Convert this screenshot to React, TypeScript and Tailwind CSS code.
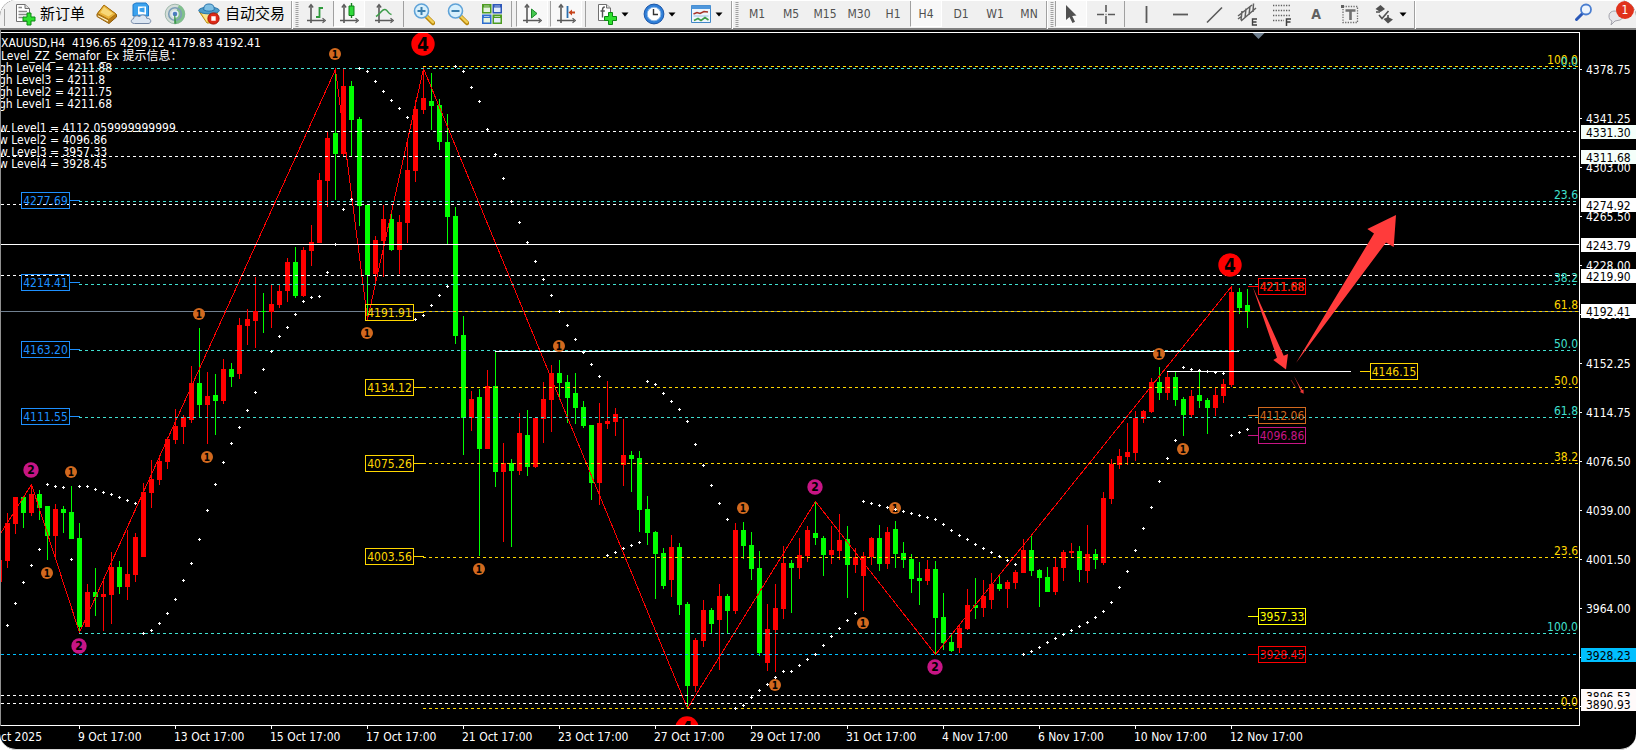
import type { ReactNode } from "react";

// [up, high, body top, body bottom, low]
const CANDLES: number[][] = [
    [1, 513, 523, 561, 568], [1, 497, 497, 524, 534], [0, 497, 497, 513, 528], [1, 484, 494, 513, 516],
    [0, 490, 494, 508, 520], [0, 506, 506, 536, 560], [1, 504, 509, 536, 560], [0, 506, 509, 513, 533],
    [0, 486, 512, 539, 539], [0, 523, 538, 627, 632], [1, 584, 592, 627, 627], [0, 568, 592, 597, 616],
    [1, 578, 594, 597, 631], [1, 552, 567, 595, 624], [0, 561, 567, 587, 594], [1, 530, 574, 587, 600],
    [1, 533, 537, 575, 582], [1, 483, 492, 557, 557], [1, 460, 479, 493, 508], [1, 457, 461, 480, 485],
    [1, 437, 439, 462, 469], [1, 409, 426, 440, 444], [1, 415, 417, 427, 444], [1, 366, 383, 420, 423],
    [0, 328, 383, 405, 417], [1, 372, 396, 405, 444], [0, 374, 395, 401, 435], [1, 359, 369, 401, 404],
    [0, 363, 369, 377, 387], [1, 318, 325, 374, 379], [1, 309, 319, 326, 345], [1, 277, 311, 321, 348],
    [0, 293, 311, 312, 333], [1, 285, 304, 312, 328], [1, 285, 291, 305, 308], [1, 258, 262, 291, 302],
    [0, 247, 262, 296, 298], [1, 247, 250, 296, 297], [1, 225, 242, 251, 266], [1, 173, 180, 243, 243],
    [1, 132, 138, 181, 207], [0, 70, 133, 154, 200], [1, 69, 86, 154, 157], [0, 81, 86, 120, 156],
    [0, 117, 119, 206, 226], [0, 205, 205, 275, 316], [1, 236, 240, 274, 281], [1, 205, 219, 241, 277],
    [0, 213, 219, 250, 251], [1, 215, 222, 250, 274], [1, 138, 170, 223, 243], [1, 100, 109, 171, 182],
    [1, 68, 98, 110, 114], [0, 73, 101, 106, 130], [0, 99, 105, 142, 150], [0, 114, 142, 217, 244],
    [0, 207, 216, 336, 344], [0, 316, 335, 418, 455], [1, 391, 399, 418, 431], [0, 389, 397, 449, 556],
    [1, 370, 386, 449, 449], [0, 351, 386, 472, 487], [1, 443, 463, 472, 542], [0, 459, 463, 471, 547],
    [1, 413, 433, 471, 475], [0, 410, 435, 467, 476], [1, 417, 418, 467, 468], [1, 382, 399, 419, 443],
    [1, 365, 373, 400, 432], [0, 360, 373, 383, 400], [0, 375, 382, 398, 423], [0, 373, 393, 408, 424],
    [0, 401, 407, 426, 428], [0, 425, 425, 483, 500], [1, 403, 423, 483, 505], [1, 381, 421, 424, 429],
    [1, 408, 414, 422, 436], [1, 419, 455, 465, 486], [0, 451, 455, 459, 492], [0, 451, 458, 510, 532],
    [0, 496, 509, 533, 545], [0, 531, 532, 554, 599], [0, 548, 553, 586, 589], [1, 535, 547, 580, 597],
    [0, 543, 547, 605, 615], [0, 602, 604, 686, 708], [1, 638, 640, 686, 692], [1, 600, 610, 641, 647],
    [0, 608, 610, 624, 634], [1, 584, 596, 620, 670], [0, 594, 596, 611, 634], [1, 523, 530, 611, 614],
    [0, 522, 530, 546, 559], [0, 532, 545, 569, 580], [0, 551, 568, 653, 656], [1, 604, 629, 663, 671],
    [1, 584, 608, 630, 672], [1, 546, 563, 609, 619], [0, 560, 563, 568, 613], [1, 538, 555, 568, 579],
    [1, 526, 530, 556, 562], [0, 501, 533, 538, 545], [0, 536, 538, 555, 576], [1, 526, 550, 555, 564],
    [1, 514, 540, 551, 560], [0, 526, 539, 565, 598], [1, 548, 557, 565, 573], [1, 552, 556, 576, 611],
    [1, 537, 538, 557, 565], [0, 525, 538, 564, 571], [1, 527, 532, 564, 569], [0, 521, 529, 554, 568],
    [0, 542, 553, 560, 568], [0, 554, 559, 579, 593], [0, 562, 578, 581, 605], [1, 560, 569, 581, 585],
    [0, 561, 569, 618, 654], [0, 593, 617, 643, 650], [0, 635, 642, 651, 652], [1, 625, 628, 648, 653],
    [1, 589, 605, 629, 630], [0, 578, 605, 608, 619], [1, 580, 596, 608, 617], [1, 573, 584, 600, 609],
    [0, 576, 584, 589, 591], [1, 580, 582, 589, 608], [1, 570, 572, 583, 589], [1, 539, 550, 573, 573],
    [0, 536, 550, 571, 576], [0, 569, 570, 578, 607], [0, 567, 577, 592, 592], [1, 557, 567, 592, 595],
    [1, 550, 552, 568, 581], [1, 543, 551, 553, 557], [0, 546, 551, 570, 582], [1, 525, 554, 571, 583],
    [0, 549, 554, 560, 569], [1, 492, 498, 563, 565], [1, 459, 464, 499, 504], [1, 449, 456, 465, 469],
    [1, 423, 452, 457, 465], [1, 411, 418, 453, 461], [1, 410, 411, 419, 423], [1, 378, 382, 412, 413],
    [0, 367, 382, 393, 400], [1, 372, 377, 393, 400], [0, 372, 377, 400, 406], [0, 397, 399, 415, 436],
    [1, 390, 396, 415, 417], [0, 371, 395, 401, 408], [0, 398, 400, 408, 434], [1, 387, 395, 408, 416],
    [1, 379, 384, 396, 403], [1, 286, 292, 385, 387], [0, 288, 292, 308, 314], [0, 289, 305, 312, 328],
];

// parabolic SAR, one value per candle
const SAR = [
    625, 603, 582, 565, 549, 484, 486, 487, 559, 486, 486, 489, 492, 494, 497, 500, 503, 633, 630, 623,
    613, 599, 580, 563, 539, 510, 484, 462, 443, 427, 410, 392, 369, 351, 336, 327, 314, 301, 297, 296,
    272, 244, 209, 199, 68, 71, 81, 91, 100, 108, 117, 319, 315, 305, 295, 286, 66, 71, 87, 101,
    129, 154, 178, 201, 222, 242, 261, 279, 295, 311, 325, 339, 352, 364, 376, 555, 552, 548, 545, 542,
    381, 384, 393, 401, 409, 421, 444, 465, 485, 503, 519, 708, 705, 697, 690, 684, 677, 671, 671, 665,
    659, 654, 645, 636, 628, 620, 613, 501, 503, 505, 507, 509, 511, 513, 515, 517, 519, 524, 530, 535,
    539, 544, 548, 552, 556, 560, 564, 654, 651, 647, 642, 638, 634, 630, 626, 622, 617, 611, 602, 587,
    571, 550, 528, 507, 481, 458, 440, 367, 369, 370, 371, 372, 373, 435, 432, 429,
];

const WHITE = "#ffffff";
const GOLD = "#ffd700";
const TURQUOISE = "#40e0d0";
const BLUE = "#1e90ff";
const ORANGE = "#d2691e";
const VIOLET = "#c71585";
const RED = "#ff0000";

const LEVELS = [
    { y: 131, x: 1, color: WHITE }, { y: 156, x: 1, color: WHITE }, { y: 204, x: 1, color: WHITE },
    { y: 275, x: 1, color: WHITE }, { y: 695, x: 1, color: WHITE }, { y: 703, x: 1, color: WHITE },
    { y: 654, x: 1, color: "#00bfff" },
    { y: 66, x: 423, color: GOLD, label: "100.0" }, { y: 311, x: 423, color: GOLD, label: "61.8" },
    { y: 387, x: 423, color: GOLD, label: "50.0" }, { y: 463, x: 423, color: GOLD, label: "38.2" },
    { y: 557, x: 423, color: GOLD, label: "23.6" }, { y: 708, x: 423, color: GOLD, label: "0.0" },
    { y: 68, x: 79, color: TURQUOISE, label: "0.0" }, { y: 201, x: 79, color: TURQUOISE, label: "23.6" },
    { y: 284, x: 79, color: TURQUOISE, label: "38.2" }, { y: 350, x: 79, color: TURQUOISE, label: "50.0" },
    { y: 417, x: 79, color: TURQUOISE, label: "61.8" }, { y: 633, x: 79, color: TURQUOISE, label: "100.0" },
];

// side: where the short stub sits
const TAGS = [
    { x: 21, y: 200, text: "4277.69", color: BLUE, side: "right" },
    { x: 21, y: 282, text: "4214.41", color: BLUE, side: "right" },
    { x: 21, y: 349, text: "4163.20", color: BLUE, side: "right" },
    { x: 21, y: 416, text: "4111.55", color: BLUE, side: "right" },
    { x: 365, y: 312, text: "4191.91", color: GOLD, side: "right" },
    { x: 365, y: 387, text: "4134.12", color: GOLD, side: "right" },
    { x: 365, y: 463, text: "4075.26", color: GOLD, side: "right" },
    { x: 365, y: 556, text: "4003.56", color: GOLD, side: "right" },
    { x: 1258, y: 286, text: "4211.68", color: ORANGE, side: "left" },
    { x: 1258, y: 286, text: "4211.88", color: RED, side: "left" },
    { x: 1258, y: 415, text: "4112.06", color: ORANGE, side: "left" },
    { x: 1258, y: 435, text: "4096.86", color: VIOLET, side: "left" },
    { x: 1258, y: 616, text: "3957.33", color: "#ffff00", side: "left" },
    { x: 1258, y: 654, text: "3928.45", color: RED, side: "left" },
    { x: 1370, y: 371, text: "4146.15", color: GOLD, side: "left" },
];

const MARKS: [number, number, number][] = [
    [1, 335, 54], [1, 199, 314], [1, 367, 333], [1, 207, 457], [1, 71, 472], [1, 47, 573],
    [1, 559, 346], [1, 479, 569], [1, 743, 508], [1, 775, 685], [1, 895, 508], [1, 863, 623],
    [1, 1159, 354], [1, 1183, 449],
    [2, 31, 470], [2, 79, 646], [2, 815, 487], [2, 935, 667],
    [4, 423, 44], [4, 687, 728], [4, 1230, 265],
];

const PRICES: [number, string][] = [
    [69, "4378.75"], [118, "4341.25"], [167, "4303.00"], [216, "4265.50"], [265, "4228.00"],
    [314, "4189.75"], [363, "4152.25"], [412, "4114.75"], [461, "4076.50"], [510, "4039.00"],
    [559, "4001.50"], [608, "3964.00"], [657, "3926.50"], [706, "3888.25"],
];

const PRICE_BOXES: [number, string, string][] = [
    [125, "4331.30", "#f5fffa"], [150, "4311.68", "#f5fffa"], [198, "4274.92", WHITE],
    [238, "4243.79", WHITE], [269, "4219.90", WHITE], [304, "4192.41", WHITE],
    [648, "3928.23", "#00bfff"], [689, "3896.53", "#fffafa"], [697, "3890.93", "#fffafa"],
];

const DATES = [
    "9 Oct 17:00", "13 Oct 17:00", "15 Oct 17:00", "17 Oct 17:00", "21 Oct 17:00", "23 Oct 17:00",
    "27 Oct 17:00", "29 Oct 17:00", "31 Oct 17:00", "4 Nov 17:00", "6 Nov 17:00", "10 Nov 17:00",
    "12 Nov 17:00",
];

const COMMENTS: [number, string][] = [
    [72, "gh Level4 = 4211.88"], [84, "gh Level3 = 4211.8"], [96, "gh Level2 = 4211.75"],
    [108, "gh Level1 = 4211.68"], [132, "w Level1 = 4112.059999999999"], [144, "w Level2 = 4096.86"],
    [156, "w Level3 = 3957.33"], [168, "w Level4 = 3928.45"],
];

const candleX = (i: number) => 7 + i * 8;

function Icon({ children, w = 22 }: { children: ReactNode; w?: number }) {
    return (
        <svg width={w} height="24" viewBox={`0 0 ${w} 24`} fill="none" className="shrink-0" aria-hidden="true">
            {children}
        </svg>
    );
}

function Tool({ label, pressed, children }: { label: string; pressed?: boolean; children: ReactNode }) {
    return (
        <button
            aria-label={label}
            aria-pressed={pressed}
            className={
                pressed
                    ? "mr-[2px] flex h-[26px] w-[32px] items-center justify-center border-b border-l border-r border-b-white border-l-[#a0a0a0] border-r-white bg-[#f8f8f8] text-[#505050]"
                    : "flex h-[26px] w-[34px] items-center justify-center text-[#505050]"
            }
        >
            {children}
        </button>
    );
}

function MenuTool({ label, children }: { label: string; children: ReactNode }) {
    return (
        <button aria-label={label} className="flex h-[26px] w-[47px] items-center justify-center gap-[3px] text-[#505050]">
            {children}
            <Caret />
        </button>
    );
}

function Caret() {
    return (
        <svg width="8" height="5" viewBox="0 0 8 5" className="shrink-0" aria-hidden="true">
            <path d="M0.5 0.5h7L4 4.5z" fill="#000" />
        </svg>
    );
}

function Divider() {
    return <div className="h-[26px] w-px shrink-0 bg-[#a0a0a0]" />;
}

function GroupEdge() {
    return (
        <div className="flex h-[28px] shrink-0 gap-[2px]">
            <div className="w-[2px] border-l border-r border-l-[#a0a0a0] border-r-white" />
            <svg width="4" height="26" viewBox="0 0 4 26" aria-hidden="true">
                <path d="M2 1V26" stroke="#a0a0a0" strokeWidth="3" strokeDasharray="1 1" />
            </svg>
        </div>
    );
}

function Axes() {
    return (
        <g stroke="#5a5a5a" strokeWidth="1.6">
            <path d="M5 3V21M1 18.5H18" />
            <path d="M2.8 5.5L5 2.6L7.2 5.5M16.5 16.2L19.4 18.5L16.5 20.8" strokeWidth="1.3" />
        </g>
    );
}

function Plus({ x, y }: { x: number; y: number }) {
    return (
        <path
            d={`M${x + 4} ${y}h4v4h4v4h-4v4h-4v-4h-4v-4h4z`}
            fill="#2fe02f"
            stroke="#0a8a12"
            strokeWidth="1"
        />
    );
}

function Magnifier({ plus }: { plus: boolean }) {
    return (
        <Icon>
            <path d="M13 14L20 21" stroke="#b8860b" strokeWidth="4.5" strokeLinecap="round" />
            <path d="M13.5 14L20 20.3" stroke="#f2cf55" strokeWidth="2.4" strokeLinecap="round" />
            <circle cx="8.5" cy="9" r="7" fill="#d8f0fc" stroke="#5fa3d8" strokeWidth="1.6" />
            <path d={plus ? "M4.5 9H12.5M8.5 5V13" : "M4.5 9H12.5"} stroke="#3a7fae" strokeWidth="2" />
        </Icon>
    );
}

function Toolbar() {
    return (
        <header className="flex h-[30px] items-start border-t border-b-2 border-t-white border-b-[#808080] bg-[#f0f0f0] pl-[4px] font-['DejaVu_Sans_Condensed','Noto_Sans','Noto_Sans_CJK_SC',sans-serif]">
            <div className="mt-[8px] h-[17px] w-px shrink-0 bg-[#a0a0a0]" />
            <button className="flex h-[26px] items-center gap-[4px] pl-[9px] pr-[5px] text-[15px] whitespace-nowrap text-black">
                <Icon>
                    <path d="M2.5 2.5H11L15.5 6.5V19.5H2.5Z" fill="#fff" stroke="#707070" />
                    <path d="M11 2.5V6.5H15.5" fill="#ddd" stroke="#707070" />
                    <path d="M4.5 5.5H8M4.5 9.5H13M4.5 12.5H13M4.5 15.5H10" stroke="#888" strokeWidth="1.3" />
                    <Plus x={9} y={11} />
                </Icon>
                新订单
            </button>
            <Tool label="历史数据中心">
                <Icon>
                    <path d="M8 3.5L20.5 12.5V15L13 21.5L1 14.5V12Z" fill="#b97a14" stroke="#8c5a0a" />
                    <path d="M8 3L20 12L12.8 17.5L1.5 11.5Z" fill="#e9b43c" stroke="#a8700f" />
                    <path d="M8 5L17 11.5L12.5 14.5L4.5 10.5Z" fill="#f7d878" />
                    <path d="M1.5 12.5V14.5L12.5 20.5V18Z" fill="#fff0c0" stroke="#a8700f" strokeWidth="0.8" />
                </Icon>
            </Tool>
            <Tool label="虚拟主机">
                <Icon>
                    <path d="M3 2.5L6 1H16L18.5 4V14H3Z" fill="#3ba2ee" stroke="#1f78c8" />
                    <path d="M8 4.5H16V12.5H8Z" fill="#fff" />
                    <path d="M9.5 6.2L14.5 5.5V10.5L9.5 9.5Z" fill="#3ba2ee" />
                    <path d="M4.5 21.5C0.5 21.5 .3 17.5 3.5 16.8C3.5 13.8 8 12.8 9.3 15C11.5 11.5 17 13 16.6 16.2C21.8 16 22 21.5 18 21.5Z" fill="#dce6f2" stroke="#7488a6" />
                </Icon>
            </Tool>
            <Tool label="交易信号">
                <Icon>
                    <circle cx="11" cy="12" r="9.8" fill="#d3ddd8" stroke="#9fb8ac" />
                    <path d="M11 12L11.5 21.8A9.8 9.8 0 0 0 15 3Z" fill="#7fc08c" />
                    <circle cx="11" cy="12" r="6.3" stroke="#7d9db8" strokeWidth="1.6" />
                    <circle cx="11" cy="12" r="3" fill="#4c7cc0" stroke="#e4eef6" strokeWidth="1.4" />
                    <path d="M10.2 14.5L11 12L12.4 21.8H10.2Z" fill="#3d9a4c" />
                </Icon>
            </Tool>
            <button className="mr-[6px] flex h-[26px] items-center gap-[5px] pl-[6px] text-[15px] whitespace-nowrap text-black">
                <Icon>
                    <path d="M1.5 10L9 21H17L19.5 10Z" fill="#f3c840" stroke="#b98c14" />
                    <path d="M4 12L9 20L11 12Z" fill="#fbe48c" />
                    <ellipse cx="11" cy="8.5" rx="10.3" ry="3.4" fill="#4f9cc8" stroke="#2a75ac" />
                    <path d="M5.8 8C5.5 3 8 2 11 2C14 2 16.5 3 16.2 8C13 9.6 9 9.6 5.8 8Z" fill="#7fc0e4" stroke="#2a75ac" />
                    <circle cx="15.5" cy="16.5" r="5.6" fill="#de2a18" stroke="#a81408" />
                    <path d="M13.3 14.3H17.7V18.7H13.3Z" fill="#fff" />
                </Icon>
                自动交易
            </button>
            <GroupEdge />
            <Tool label="柱状图">
                <Icon w={20}>
                    <Axes />
                    <path d="M13.5 5V16M10 15H13.5M13.5 6H17" stroke="#2f9a3c" strokeWidth="1.8" />
                </Icon>
            </Tool>
            <Tool label="蜡烛图" pressed>
                <Icon w={20}>
                    <Axes />
                    <path d="M12.5 1V16" stroke="#12801c" strokeWidth="1.4" />
                    <path d="M10 4H15V13.5H10Z" fill="#2fd93a" stroke="#12801c" />
                </Icon>
            </Tool>
            <Tool label="折线图">
                <Icon w={20}>
                    <Axes />
                    <path d="M2 14.5C6 12 8 7 11 7.5C14 8 14 12 17.5 12.5" stroke="#3c9c48" strokeWidth="1.5" />
                </Icon>
            </Tool>
            <div className="flex gap-[3px] pl-[2px]">
                <Divider />
                <div className="flex">
                    <Tool label="放大"><Magnifier plus /></Tool>
                    <Tool label="缩小"><Magnifier plus={false} /></Tool>
                    <Tool label="平铺窗口">
                        <Icon>
                            <path d="M1 2H10.5V11.5H1Z" fill="#4d9c22" />
                            <path d="M11.5 2H21V11.5H11.5Z" fill="#2c56b8" />
                            <path d="M1 12.5H10.5V22H1Z" fill="#2f6fd0" />
                            <path d="M11.5 12.5H21V22H11.5Z" fill="#4d9c22" />
                            <path d="M2.5 5.5H9V10H2.5ZM2.5 16H9V20.5H2.5Z" fill="#e6f4e0" />
                            <path d="M13 5.5H19.5V10H13ZM13 16H19.5V20.5H13Z" fill="#e2ecfb" />
                            <path d="M3 4H8.5M13.5 4H19M3 14.5H8.5M13.5 14.5H19" stroke="#fff" opacity="0.6" />
                        </Icon>
                    </Tool>
                </div>
            </div>
            <div className="flex gap-[4px] pl-[2px]">
                <Divider />
                <div className="flex">
                    <Tool label="自动滚动" pressed>
                        <Icon w={20}>
                            <Axes />
                            <path d="M9.5 7L15 11.5L9.5 16Z" fill="#45c84f" stroke="#1d8a2a" />
                        </Icon>
                    </Tool>
                    <Tool label="图表平移" pressed>
                        <Icon w={20}>
                            <Axes />
                            <path d="M11.5 4V16" stroke="#2a6fae" strokeWidth="1.8" />
                            <path d="M12.5 10.5L16 7.5V9.5H19V11.5H16V13.5Z" fill="#c8451c" />
                        </Icon>
                    </Tool>
                </div>
            </div>
            <div className="flex gap-[3px] px-px">
                <Divider />
                <div className="flex">
                    <MenuTool label="指标">
                        <Icon>
                            <path d="M2.5 2.5H10.5L14.5 6V18.5H2.5Z" fill="#fff" stroke="#707070" />
                            <path d="M10.5 2.5V6H14.5" fill="#ddd" stroke="#707070" />
                            <path d="M8.8 5C7 5 6.5 6 6.5 8V15.5M4.5 9H8.8" stroke="#555" strokeWidth="1.4" />
                            <Plus x={8.5} y={10.5} />
                        </Icon>
                    </MenuTool>
                    <MenuTool label="周期">
                        <Icon>
                            <circle cx="11" cy="12" r="9.9" fill="#2f7fd8" stroke="#1a55a8" />
                            <circle cx="11" cy="12" r="6.8" fill="#fff" stroke="#8db9e8" />
                            <path d="M10.5 7V12.5H15" stroke="#333" strokeWidth="1.4" />
                        </Icon>
                    </MenuTool>
                    <MenuTool label="模板">
                        <Icon>
                            <path d="M1.5 3.5H20.5V20.5H1.5Z" fill="#eef6fd" stroke="#4288c8" />
                            <path d="M1.5 3.5H20.5V7H1.5Z" fill="#4f97dc" />
                            <path d="M3.5 12L7 10.5L10 11.5L14 9.5L18 10" stroke="#a8352a" strokeWidth="1.6" />
                            <path d="M3.5 14H18.5" stroke="#9cc0e2" />
                            <path d="M4 18.5L8 16.5L11 18.5L15 15.5L18.5 18" stroke="#3c9c48" strokeWidth="1.6" />
                        </Icon>
                    </MenuTool>
                </div>
            </div>
            <GroupEdge />
            <div className="flex pl-px text-xs">
                <Tool label="M1">M1</Tool>
                <Tool label="M5">M5</Tool>
                <Tool label="M15">M15</Tool>
                <Tool label="M30">M30</Tool>
                <Tool label="H1">H1</Tool>
                <Tool label="H4" pressed>H4</Tool>
                <Tool label="D1">D1</Tool>
                <Tool label="W1">W1</Tool>
                <Tool label="MN">MN</Tool>
            </div>
            <GroupEdge />
            <div className="flex pl-px">
                <Tool label="光标" pressed>
                    <Icon w={20}>
                        <path d="M5 3L5 18L8.5 15L11.5 21L14 19.8L11.2 14L15.5 13.5Z" fill="#505050" />
                    </Icon>
                </Tool>
                <Tool label="十字准线">
                    <Icon w={20}>
                        <path d="M10 3V10M10 14V22M1 12.5H8M12 12.5H19" stroke="#5a5a5a" strokeWidth="1.6" />
                        <path d="M9.2 11.7H10.8V13.3H9.2Z" fill="#9a9a9a" />
                    </Icon>
                </Tool>
            </div>
            <div className="flex gap-[4px] pl-px">
                <Divider />
                <div className="flex">
                    <Tool label="垂直线">
                        <Icon w={20}><path d="M10.5 4V21" stroke="#5a5a5a" strokeWidth="1.8" /></Icon>
                    </Tool>
                    <Tool label="水平线">
                        <Icon w={20}><path d="M3 12.5H18" stroke="#5a5a5a" strokeWidth="1.8" /></Icon>
                    </Tool>
                    <Tool label="趋势线">
                        <Icon w={20}><path d="M3 20.5L18 5.5" stroke="#5a5a5a" strokeWidth="1.6" /></Icon>
                    </Tool>
                    <Tool label="等距通道">
                        <Icon>
                            <path d="M1 14L15 3M4 19L19 6M5 9L4 18M9 6.5L8 16M13 4L12 13M16.5 1.5L16 10M1 17L5 14" stroke="#606060" strokeWidth="1.5" />
                            <path d="M20 17H15.5V23H20M15.5 20H19.5" stroke="#404040" strokeWidth="1.4" />
                        </Icon>
                    </Tool>
                    <Tool label="斐波那契回调">
                        <Icon>
                            <path d="M2 3.5H19M2 8.5H19M2 13.5H19M2 18.5H13" stroke="#606060" strokeWidth="1.3" strokeDasharray="1.3 1.3" />
                            <path d="M20 17H15.5V24M15.5 20H19.5" stroke="#404040" strokeWidth="1.5" />
                        </Icon>
                    </Tool>
                    <Tool label="文字"><span className="text-[14px] font-bold text-[#606060]">A</span></Tool>
                    <Tool label="文本标签">
                        <Icon>
                            <path d="M4 4.5H18.5V20.5H4Z" stroke="#707070" strokeWidth="1.3" strokeDasharray="1.3 1.3" />
                            <path d="M6.5 8.5H16.5M11.5 8V18" stroke="#707070" strokeWidth="2.6" />
                            <path d="M2 3H5V6H2Z" fill="#606060" />
                        </Icon>
                    </Tool>
                    <button aria-label="箭头" className="mr-[7px] flex h-[26px] items-center gap-[4px] pl-[6px]">
                        <Icon>
                            <path d="M7.5 3L12 7L7.5 10L2.5 7ZM15 21.5L10.5 17L15 15L20 17.5Z" fill="#505050" />
                            <path d="M3 10H7M15 13V16M6 13L9 16.5L15.5 9" stroke="#505050" strokeWidth="1.6" />
                        </Icon>
                        <Caret />
                    </button>
                </div>
            </div>
            <div className="h-[28px] w-[2px] shrink-0 border-l border-r border-l-[#a0a0a0] border-r-white" />
            <div className="ml-auto flex">
                <button aria-label="搜索" className="mr-[12px] flex h-[26px] items-center">
                    <Icon w={20}>
                        <path d="M2.5 17.5L8 12" stroke="#2a58b8" strokeWidth="3" strokeLinecap="round" />
                        <circle cx="12" cy="7.5" r="5" fill="#eef5fd" stroke="#4a7ed0" strokeWidth="1.8" />
                    </Icon>
                </button>
                <button aria-label="消息" className="relative flex h-[26px] items-center">
                    <Icon w={30}>
                        <path d="M3 14C3 9 9 8 12 10C17 10 19 16 14 18L9 19L5 23L6 19C3.5 18 3 16 3 14Z" fill="#e6e6ea" stroke="#a4a4ac" />
                    </Icon>
                    <span className="absolute top-0 right-[2px] flex h-[18px] w-[18px] items-center justify-center rounded-full bg-[#e0321c] text-xs text-white">1</span>
                </button>
            </div>
        </header>
    );
}

function PriceTag({ x, y, text, color, side }: { x: number; y: number; text: string; color: string; side: string }) {
    const width = side === "right" ? 49 : 48;
    const stub = side === "right" ? x + width : x - 10;
    return (
        <g>
            <rect x={x + 0.5} y={y - 7.5} width={width - 1} height="16" fill="none" stroke={color} />
            <rect x={stub} y={y} width="10" height="1" fill={color} />
            <text x={x + width / 2} y={y + 5} textAnchor="middle" fill={color}>{text}</text>
        </g>
    );
}

function Mark({ level, x, y }: { level: number; x: number; y: number }) {
    if (level === 4) {
        return (
            <g>
                <circle cx={x} cy={y} r="11.7" fill={RED} />
                <text x={x} y={y + 7} textAnchor="middle" fill="#000" className="text-[19px] font-bold">4</text>
            </g>
        );
    }
    if (level === 2) {
        return (
            <g>
                <circle cx={x} cy={y} r="7.7" fill={VIOLET} />
                <text x={x} y={y + 4} textAnchor="middle" fill="#000" className="text-xs font-bold">2</text>
            </g>
        );
    }
    return (
        <g>
            <circle cx={x} cy={y} r="6" fill={ORANGE} />
            <text x={x} y={y + 4} textAnchor="middle" fill="#000" className="text-[10px] font-bold">1</text>
        </g>
    );
}

function Plot() {
    return (
        <svg width="100%" height="696" className="block overflow-hidden" role="img" aria-label="XAUUSD H4">
            <g transform="translate(0 -30)">
                <g shapeRendering="crispEdges">
                    <rect x="0" y="311" width="100%" height="1" fill="#708090" />
                    <rect x="0" y="560" width="2" height="22" fill={RED} />
                    {CANDLES.map(([up, high, top, bottom, low], i) => (
                        <g key={i} fill={up ? "#ff0000" : "#00ff00"}>
                            <rect x={candleX(i)} y={high} width="1" height={low - high} />
                            <rect x={candleX(i) - 2} y={top} width="5" height={bottom - top} />
                        </g>
                    ))}
                    <polyline
                        points="0,534.5 31.5,484.5 79.5,632.5 335.5,69.5 367.5,319.5 423.5,68.5 687.5,708.5 815.5,501.5 935.5,654.5 1231.5,286.5"
                        fill="none"
                        stroke={RED}
                    />
                    {LEVELS.map((l) => (
                        <line key={`${l.y}`} x1={l.x} x2="100%" y1={l.y + 0.5} y2={l.y + 0.5} stroke={l.color} strokeDasharray="3 3" />
                    ))}
                    <rect x="1" y="244" width="100%" height="1" fill={WHITE} />
                    <rect x="495" y="351" width="744" height="1" fill={WHITE} />
                    <rect x="1167" y="371" width="184" height="1" fill={WHITE} />
                </g>

                {MARKS.map(([level, x, y]) => (
                    <Mark key={`${x}-${y}`} level={level} x={x} y={y} />
                ))}

                <g fill={WHITE} shapeRendering="crispEdges">
                    {SAR.map((y, i) => (
                        <path key={i} d={`M${candleX(i) - 1} ${y}h1v-1h1v1h1v1h-1v1h-1v-1h-1z`} />
                    ))}
                </g>

                {LEVELS.filter((l) => l.label).map((l) => (
                    <text key={l.y} x="100%" dx="-2" y={l.y - 2} textAnchor="end" fill={l.color}>{l.label}</text>
                ))}
                {TAGS.map((t) => (
                    <PriceTag key={t.text} {...t} />
                ))}

                {/* forecast arrows */}
                <path d="M1296 363L1374 233.5L1367.3 229L1396 215L1393.7 247L1386 242.5Z" fill="#ff3b3b" />
                <path d="M1252.7 286.7L1277 357.7L1273.3 360L1286 369.5L1288 354L1283.7 355.7Z" fill="#ff3b3b" />
                <path d="M1294 376L1301 391L1300 392L1303.7 393.7L1303.5 389.5L1302 390Z" fill="#e83636" />
                <path d="M1291 380L1296 388" stroke="#7a1d1d" />

                <path d="M1252.5 33H1264.5L1258.5 39Z" fill="#708090" />

                <g fill={WHITE}>
                    <text x="1" y="47">XAUUSD,H4{"\u00a0\u00a0"}4196.65 4209.12 4179.83 4192.41</text>
                    <text x="1" y="60">Level_ZZ_Semafor_Ex 提示信息：</text>
                    {COMMENTS.map(([y, text]) => (
                        <text key={y} x="-1" y={y}>{text}</text>
                    ))}
                </g>

                <g shapeRendering="crispEdges">
                    <rect x="0" y="32" width="100%" height="1" fill={WHITE} />
                    <rect x="0" y="725" width="100%" height="1" fill={WHITE} />
                    <rect x="0" y="30" width="1" height="696" fill="#909090" />
                </g>
            </g>
        </svg>
    );
}

function PriceAxis() {
    return (
        <svg width="100%" height="696" className="block" aria-label="Price scale">
            <g transform="translate(0 -30)">
                {PRICES.map(([y, text]) => (
                    <g key={y} fill={WHITE}>
                        <rect x="0" y={y} width="2" height="1" />
                        <text x="6" y={y + 5}>{text}</text>
                    </g>
                ))}
                {PRICE_BOXES.map(([y, text, color]) => (
                    <g key={y}>
                        <rect x="1" y={y} width="100%" height="14" fill={color} />
                        <text x="6" y={y + 12} fill="#000">{text}</text>
                    </g>
                ))}
            </g>
        </svg>
    );
}

function TimeAxis() {
    return (
        <svg width="100%" height="23" className="block" aria-label="Time scale">
            <g fill={WHITE}>
                <text x="1" y="15">ct 2025</text>
                {DATES.map((d, i) => (
                    <g key={d}>
                        <rect x={79 + i * 96} y="0" width="1" height="3" />
                        <text x={78 + i * 96} y="15">{d}</text>
                    </g>
                ))}
            </g>
        </svg>
    );
}

export default function App() {
    return (
        <div className="min-h-screen bg-white">
            <div className="overflow-hidden rounded-2xl border-b border-[#d8d8d8] bg-black">
                <Toolbar />
                <main className="grid grid-cols-[minmax(0,1fr)_56px] font-['DejaVu_Sans_Condensed','Noto_Sans','Noto_Sans_CJK_SC',sans-serif] text-xs">
                    <div className="relative">
                        <Plot />
                        <div className="absolute top-[2px] right-0 bottom-0 w-px bg-white" />
                    </div>
                    <PriceAxis />
                    <div className="col-span-2">
                        <TimeAxis />
                    </div>
                </main>
            </div>
        </div>
    );
}
